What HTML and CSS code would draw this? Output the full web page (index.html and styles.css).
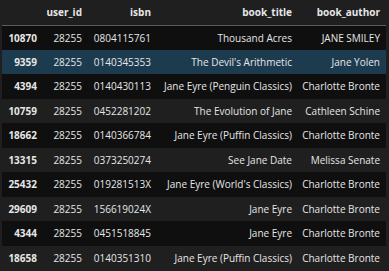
FILE: index.html
```html
<!DOCTYPE html>
<html>
<head>
<meta charset="utf-8">
<link rel="stylesheet" href="styles.css">
</head>
<body>
<table class="df">
  <colgroup>
    <col class="c0"><col class="c1"><col class="c2"><col class="c3"><col class="c4">
  </colgroup>
  <thead>
    <tr><th></th><th>user_id</th><th>isbn</th><th>book_title</th><th>book_author</th></tr>
  </thead>
  <tbody>
    <tr><th>10870</th><td>28255</td><td>0804115761</td><td>Thousand Acres</td><td>JANE SMILEY</td></tr>
    <tr class="hover"><th>9359</th><td>28255</td><td>0140345353</td><td>The Devil's Arithmetic</td><td>Jane Yolen</td></tr>
    <tr><th>4394</th><td>28255</td><td>0140430113</td><td>Jane Eyre (Penguin Classics)</td><td>Charlotte Bronte</td></tr>
    <tr><th>10759</th><td>28255</td><td>0452281202</td><td>The Evolution of Jane</td><td>Cathleen Schine</td></tr>
    <tr><th>18662</th><td>28255</td><td>0140366784</td><td>Jane Eyre (Puffin Classics)</td><td>Charlotte Bronte</td></tr>
    <tr><th>13315</th><td>28255</td><td>0373250274</td><td>See Jane Date</td><td>Melissa Senate</td></tr>
    <tr><th>25432</th><td>28255</td><td>019281513X</td><td>Jane Eyre (World's Classics)</td><td>Charlotte Bronte</td></tr>
    <tr><th>29609</th><td>28255</td><td>156619024X</td><td>Jane Eyre</td><td>Charlotte Bronte</td></tr>
    <tr><th>4344</th><td>28255</td><td>0451518845</td><td>Jane Eyre</td><td>Charlotte Bronte</td></tr>
    <tr><th>18658</th><td>28255</td><td>0140351310</td><td>Jane Eyre (Puffin Classics)</td><td>Charlotte Bronte</td></tr>
  </tbody>
</table>
</body>
</html>
```
FILE: styles.css
```css
html, body {
  margin: 0;
  padding: 0;
  background: #1f1f1f;
}
body {
  padding: 0 3px 0 2px;
  font-family: "Open Sans", "Noto Sans", sans-serif;
  font-size: 10px;
  color: #e6e6e6;
}
.df {
  border-collapse: collapse;
  table-layout: fixed;
  width: 384px;
}
.c0 { width: 41px; }
.c1 { width: 45px; }
.c2 { width: 69px; }
.c3 { width: 141px; }
.c4 { width: 88px; }
.df th, .df td {
  text-align: right;
  padding: 0 6px 0 0;
  white-space: nowrap;
  overflow: hidden;
  line-height: 14px;
}
.df th { font-weight: 700; }
.df thead tr {
  height: 25px;
  border-bottom: 1px solid #5a5a5a;
}
.df thead th { vertical-align: middle; }
.df tbody tr { height: 24.5px; }
.df tbody tr:nth-child(odd) { background: #0f0f0f; }
.df tbody tr:nth-child(even) { background: #1f1f1f; }
.df tbody tr.hover { background: #1d3b4f; }
```
